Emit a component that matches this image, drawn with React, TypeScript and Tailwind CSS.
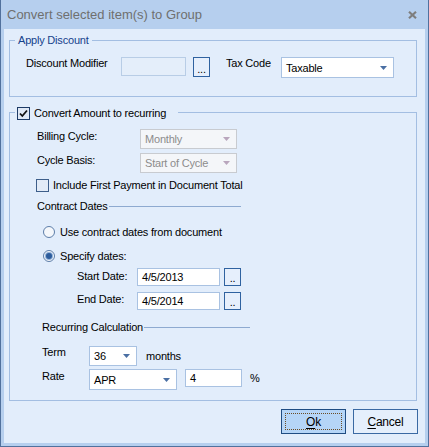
import React from "react";

const Arrow = ({ color }: { color: string }) => (
  <svg width="7" height="4" viewBox="0 0 7 4" className="shrink-0">
    <path d="M0 0H7L3.5 4Z" fill={color} />
  </svg>
);

function Combo({ className, text, disabled }: { className: string; text: string; disabled?: boolean }) {
  return (
    <div
      className={`${className} flex shrink-0 items-center justify-between border pl-[4px] pr-[6px] ${
        disabled ? "border-[#c8cbd0] bg-[#f4f6f9] text-[#8c8c8c]" : "border-[#a9c2e2] bg-white text-black"
      }`}
    >
      <span className="pt-[1px]">{text}</span>
      <Arrow color={disabled ? "#b9a6bd" : "#4a6fa3"} />
    </div>
  );
}

function TextBox({ className, text, disabled }: { className: string; text?: string; disabled?: boolean }) {
  return (
    <div
      className={`${className} flex shrink-0 items-center border pl-[4px] ${
        disabled ? "border-[#b8cde6] bg-[#e4eefa]" : "border-[#a9c2e2] bg-white"
      }`}
    >
      {text}
    </div>
  );
}

function DotButton({ className, label }: { className: string; label: string }) {
  return (
    <div
      className={`${className} flex shrink-0 items-end justify-center border border-[#2f62a0] bg-[#e6effc] pb-[2px] leading-[10px]`}
    >
      {label}
    </div>
  );
}

function CheckBox({ checked }: { checked?: boolean }) {
  return (
    <div
      className={`flex h-[13px] w-[13px] shrink-0 items-center justify-center border ${
        checked ? "border-[#1c3a66] bg-[#dfe8f5]" : "border-[#3d5e8a] bg-[#e2ebf7]"
      }`}
    >
      {checked && (
        <svg width="9" height="9" viewBox="0 0 9 9">
          <path d="M1 4.5L3.3 7L8 1.5" stroke="#111" strokeWidth="1.8" fill="none" />
        </svg>
      )}
    </div>
  );
}

function Radio({ checked }: { checked?: boolean }) {
  return (
    <div className="flex h-[12px] w-[12px] shrink-0 items-center justify-center rounded-full border border-[#5d7ea9] bg-[#f4f7fb]">
      {checked && <div className="h-[6px] w-[6px] rounded-full bg-[#2c5c9c] shadow-[0_0_0_1px_#8fb0d8]" />}
    </div>
  );
}

export default function App() {
  return (
    <div className="flex h-[447px] w-[429px] flex-col border-x border-b border-[#51719d] bg-[#b6cfee] font-[family-name:'Liberation_Sans',Arial,sans-serif] text-[11px] tracking-[-0.2px] text-black">
      {/* Title bar */}
      <div className="flex h-[29px] shrink-0 items-center justify-between pl-[6px] pr-[11px]">
        <span className="text-[13px] tracking-normal text-[#6f6f6f]">Convert selected item(s) to Group</span>
        <svg width="9" height="8" viewBox="0 0 9 8" className="mt-[1px]">
          <path d="M1 0.8L8 7.2M8 0.8L1 7.2" stroke="#7e7e7e" strokeWidth="2.2" />
        </svg>
      </div>

      {/* Body */}
      <div className="mx-[3px] mb-[3px] flex flex-1 flex-col bg-[#e2edfb] pl-[5px] pt-[4px]">
        {/* Apply Discount */}
        <fieldset className="w-[408px] border border-[#a3bee2] pb-[18px] pt-[10px]">
          <legend className="ml-[5px] px-[3px] leading-[14px] text-[#15428b]">Apply Discount</legend>
          <div className="flex h-[21px] items-start pl-[16px]">
            <span className="w-[95px] shrink-0 leading-[13px]">Discount Modifier</span>
            <TextBox className="h-[19px] w-[65px]" disabled />
            <DotButton className="ml-[7px] h-[20px] w-[17px]" label="..." />
            <span className="ml-[16px] w-[55px] shrink-0 leading-[13px]">Tax Code</span>
            <Combo className="h-[21px] w-[113px]" text="Taxable" />
          </div>
        </fieldset>

        {/* Convert Amount to recurring */}
        <fieldset className="mt-[7px] w-[408px] border border-[#a3bee2] pb-[10px]">
          <legend className="ml-[5px] flex h-[16px] items-center pl-[2px] pr-[12px] pt-[3px]">
            <CheckBox checked />
            <span className="ml-[4px]">Convert Amount to recurring</span>
          </legend>

          <div className="mt-[9px] flex h-[20px] items-start pl-[27px]">
            <span className="mt-[1px] w-[103px] shrink-0 leading-[13px]">Billing Cycle:</span>
            <Combo className="h-[20px] w-[97px]" text="Monthly" disabled />
          </div>
          <div className="mt-[4px] flex h-[20px] items-start pl-[27px]">
            <span className="mt-[1px] w-[103px] shrink-0 leading-[13px]">Cycle Basis:</span>
            <Combo className="h-[20px] w-[97px]" text="Start of Cycle" disabled />
          </div>

          <div className="mt-[6px] flex h-[13px] items-center pl-[26px]">
            <CheckBox />
            <span className="ml-[4px] leading-[13px]">Include First Payment in Document Total</span>
          </div>

          <div className="mt-[8px] flex h-[13px] w-[231px] items-center pl-[27px]">
            <span className="shrink-0 leading-[13px]">Contract Dates</span>
            <div className="ml-[1px] h-px flex-1 bg-[#8eaad0]" />
          </div>

          <div className="mt-[12px] flex h-[14px] items-center pl-[33px]">
            <Radio />
            <span className="ml-[5px] leading-[13px]">Use contract dates from document</span>
          </div>
          <div className="mt-[10px] flex h-[14px] items-center pl-[33px]">
            <Radio checked />
            <span className="ml-[5px] leading-[13px]">Specify dates:</span>
          </div>

          <div className="mt-[5px] flex h-[18px] items-center pl-[67px]">
            <span className="mb-[2px] w-[60px] shrink-0 leading-[13px]">Start Date:</span>
            <TextBox className="h-[18px] w-[83px]" text="4/5/2013" />
            <DotButton className="ml-[4px] h-[18px] w-[17px]" label=".." />
          </div>
          <div className="mt-[6px] flex h-[18px] items-center pl-[67px]">
            <span className="mb-[3px] w-[60px] shrink-0 leading-[13px]">End Date:</span>
            <TextBox className="h-[18px] w-[83px]" text="4/5/2014" />
            <DotButton className="ml-[4px] h-[18px] w-[17px]" label=".." />
          </div>

          <div className="mt-[11px] flex h-[13px] w-[240px] items-center pl-[32px]">
            <span className="shrink-0 leading-[13px]">Recurring Calculation</span>
            <div className="ml-[1px] h-px flex-1 bg-[#8eaad0]" />
          </div>

          <div className="mt-[12px] flex h-[20px] items-start pl-[32px]">
            <span className="w-[47px] shrink-0 leading-[13px]">Term</span>
            <Combo className="h-[20px] w-[48px]" text="36" />
            <span className="ml-[9px] self-center leading-[13px]">months</span>
          </div>
          <div className="mt-[3px] flex h-[21px] items-start pl-[32px]">
            <span className="mt-[1px] w-[47px] shrink-0 leading-[13px]">Rate</span>
            <Combo className="h-[21px] w-[88px]" text="APR" />
            <TextBox className="ml-[8px] h-[18px] w-[57px]" text="4" />
            <span className="ml-[8px] leading-[18px]">%</span>
          </div>
        </fieldset>

        {/* Buttons */}
        <div className="mt-[8px] flex w-[409px] justify-end gap-[7px]">
          <div className="flex h-[25px] w-[65px] border border-[#1f4c82] bg-[#b5d5f7] p-[3px]">
            <div className="flex flex-1 items-center justify-center border border-dotted border-[#6b4c24] text-[12px]">
              <span>
                <span className="underline underline-offset-[2px]">O</span>k
              </span>
            </div>
          </div>
          <div className="flex h-[25px] w-[65px] items-center justify-center border border-[#3a69a3] bg-[#e5effc] text-[12px]">
            <span>
              <span className="underline underline-offset-[2px]">C</span>ancel
            </span>
          </div>
        </div>
      </div>
    </div>
  );
}
